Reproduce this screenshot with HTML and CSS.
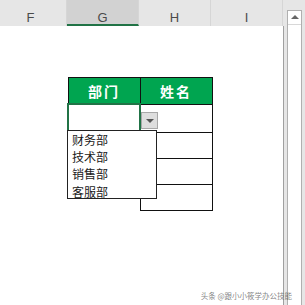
FILE: index.html
```html
<!DOCTYPE html>
<html lang="zh-CN">
<head>
    <meta charset="UTF-8">
    <title>数据验证下拉列表</title>
    <link rel="stylesheet" href="styles.css">
</head>
<body>
    <div class="sheet">
        <div class="main">
            <div class="cols">
                <div class="col first">F</div>
                <div class="col sel">G</div>
                <div class="col">H</div>
                <div class="col">I</div>
            </div>
            <div class="grid">
                <div class="tbl-wrap">
                    <table class="tbl">
                        <tr>
                            <th>部门</th>
                            <th>姓名</th>
                        </tr>
                        <tr class="r1">
                            <td class="active">
                                <span class="drop-btn"></span>
                            </td>
                            <td></td>
                        </tr>
                        <tr>
                            <td class="blank"></td>
                            <td></td>
                        </tr>
                        <tr>
                            <td class="blank"></td>
                            <td></td>
                        </tr>
                        <tr>
                            <td class="blank"></td>
                            <td></td>
                        </tr>
                    </table>
                    <ul class="list">
                        <li>财务部</li>
                        <li>技术部</li>
                        <li>销售部</li>
                        <li>客服部</li>
                    </ul>
                </div>
                <div class="mark">头条 @跟小小筱学办公技能</div>
            </div>
        </div>
        <div class="scroll">
            <div class="track">
                <div class="up"></div>
            </div>
        </div>
    </div>
</body>
</html>
```

FILE: styles.css
```css
body {
    margin: 0;
    width: 305px;
    height: 305px;
    overflow: hidden;
    background: #e6e6e6;
    font-family: "Liberation Sans", "Noto Sans CJK SC", sans-serif;
}
.sheet {
    display: flex;
    height: 305px;
}
.main {
    width: 284px;
    display: flex;
    flex-direction: column;
    background: #fff;
}
.cols {
    height: 26px;
    display: flex;
    background: #e6e6e6;
    overflow: hidden;
}
.col {
    flex: none;
    width: 72px;
    box-sizing: border-box;
    padding-top: 10px;
    text-align: center;
    font-size: 13px;
    color: #4a4a4a;
    border-right: 1px solid #d6d6d6;
}
.col.first {
    margin-left: -5px;
}
.col.sel {
    background: #d2d2d2;
    border-bottom: 2px solid #217346;
}
.grid {
    flex: 1;
    position: relative;
    border-right: 1px solid #a0a0a0;
    padding-top: 51px;
    padding-left: 67px;
}
.tbl-wrap {
    position: relative;
    width: 146px;
}
.tbl {
    border-collapse: collapse;
    table-layout: fixed;
}
.tbl th {
    width: 71px;
    height: 25px;
    padding: 0;
    background: #00a550;
    color: #fff;
    font-family: "Noto Sans CJK SC", sans-serif;
    font-size: 14px;
    font-weight: bold;
    letter-spacing: 2px;
    border: 1px solid #111;
}
.tbl td {
    height: 25px;
    padding: 0;
    border: 1px solid #111;
}
.tbl .r1 td {
    height: 26px;
}
.tbl td.blank {
    border: none;
}
.tbl td.active {
    position: relative;
    border: 2px solid #217346;
}
.drop-btn {
    position: absolute;
    left: 72px;
    top: 7px;
    width: 15px;
    height: 15px;
    background: #dedede;
    border: 1px solid #a8a8a8;
}
.drop-btn::after {
    content: "";
    position: absolute;
    left: 4px;
    top: 6px;
    border-left: 4px solid transparent;
    border-right: 4px solid transparent;
    border-top: 4px solid #555;
}
.list {
    position: absolute;
    left: 0;
    top: 53px;
    width: 84px;
    height: 67px;
    margin: 0;
    padding: 0 0 0 4px;
    box-sizing: content-box;
    list-style: none;
    background: #fff;
    border: 1px solid #222;
    font-family: "Noto Sans CJK SC", sans-serif;
    font-size: 12px;
    line-height: 17.2px;
    color: #1a1a1a;
}
.mark {
    position: absolute;
    right: -9px;
    bottom: 4px;
    font-family: "Noto Sans CJK SC", sans-serif;
    font-size: 7.5px;
    color: rgba(90, 90, 90, 0.75);
    white-space: nowrap;
}
.scroll {
    width: 21px;
    box-sizing: border-box;
    padding: 10px 3px 0 3px;
    display: flex;
}
.track {
    flex: 1;
    background: #fff;
    border: 1px solid #b0b0b0;
    border-bottom: none;
}
.up {
    height: 13px;
    border-bottom: 1px solid #d8d8d8;
    position: relative;
}
.up::after {
    content: "";
    position: absolute;
    left: 3px;
    top: 4px;
    border-left: 4px solid transparent;
    border-right: 4px solid transparent;
    border-bottom: 4px solid #666;
}
```
